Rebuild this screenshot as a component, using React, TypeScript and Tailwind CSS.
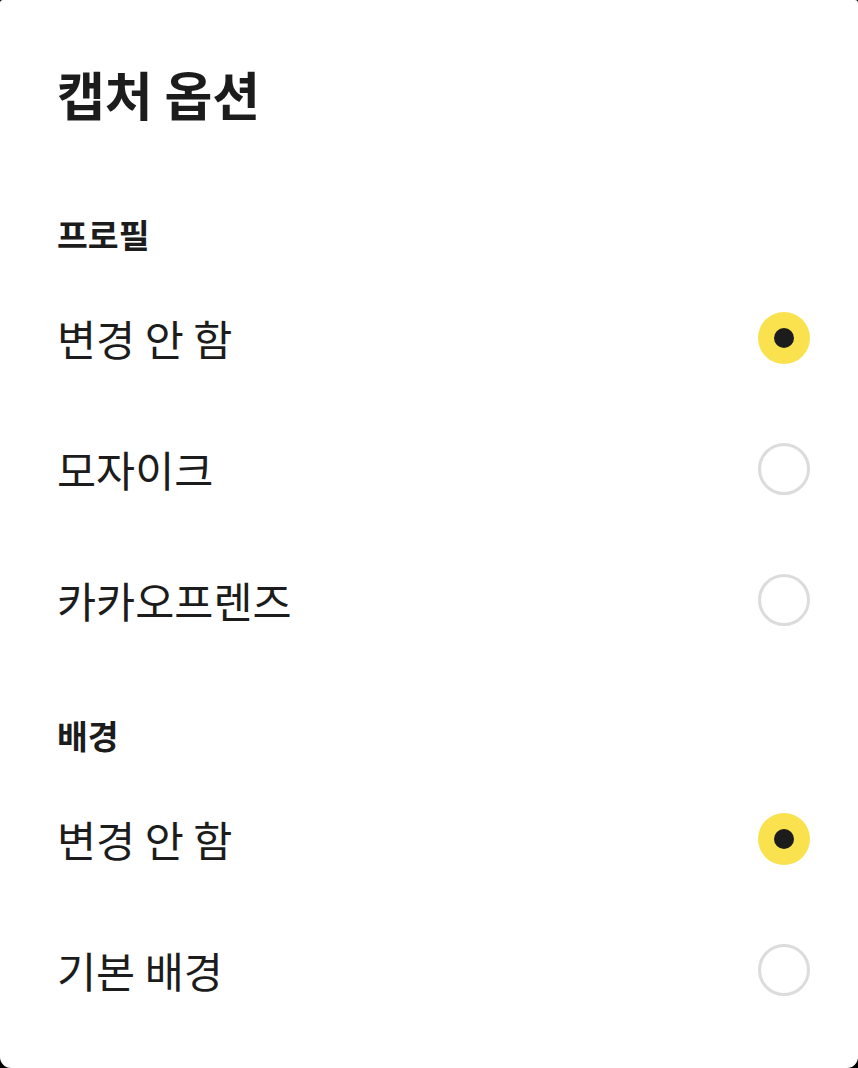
import React from 'react';

type Option = { label: string };

const sections: { title: string; options: Option[]; selected: number }[] = [
  {
    title: '프로필',
    options: [{ label: '변경 안 함' }, { label: '모자이크' }, { label: '카카오프렌즈' }],
    selected: 0,
  },
  {
    title: '배경',
    options: [{ label: '변경 안 함' }, { label: '기본 배경' }],
    selected: 0,
  },
];

const Radio = ({ checked }: { checked: boolean }) =>
  checked ? (
    <span className="flex h-[52px] w-[52px] shrink-0 items-center justify-center rounded-full bg-[#f9e24d]">
      <span className="block h-[20px] w-[20px] rounded-full bg-[#1c1c1c]" />
    </span>
  ) : (
    <span className="block h-[52px] w-[52px] shrink-0 rounded-full border-[3px] border-[#dcdcdc]" />
  );

const App = () => {
  const [picked, setPicked] = React.useState(sections.map((s) => s.selected));

  return (
    <div className="min-h-[1068px] bg-black" style={{ fontFamily: '"Noto Sans CJK KR", "Noto Sans", sans-serif' }}>
      <div className="h-[1068px] rounded-t-[3px] rounded-b-[11px] bg-white px-[57px] text-[#1c1c1c]">
        <h1 className="pt-[62px] text-[52px] font-bold leading-[64px]">캡처 옵션</h1>

        {sections.map((section, si) => (
          <section key={section.title} className={si === 0 ? 'mt-[88px]' : 'mt-[50px]'}>
            <h2 className="mb-[18px] text-[33.5px] font-bold leading-[40px]">{section.title}</h2>
            {section.options.map((opt, oi) => (
              <button
                key={opt.label}
                className="flex h-[131px] w-full items-center justify-between"
                onClick={() => setPicked(picked.map((p, i) => (i === si ? oi : p)))}
              >
                <span className="text-[42.5px] leading-[48px]">{opt.label}</span>
                <span className="-mr-[9px] block">
                  <Radio checked={picked[si] === oi} />
                </span>
              </button>
            ))}
          </section>
        ))}
      </div>
    </div>
  );
};

export default App;
